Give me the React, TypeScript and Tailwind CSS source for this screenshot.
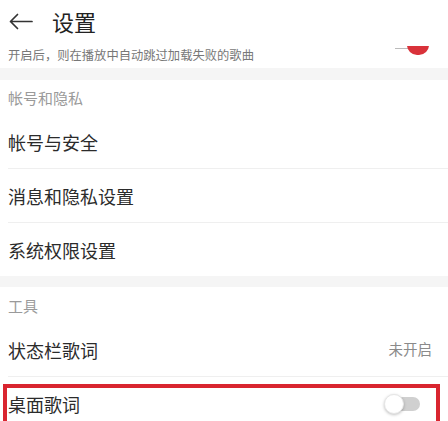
import React from 'react';

const font = { fontFamily: '"Noto Sans CJK SC", "Noto Sans", sans-serif' };

function Divider() {
  return <div className="ml-[8px] h-px bg-[#efefef]" />;
}

function Row({ label, right }: { label: string; right?: React.ReactNode }) {
  return (
    <div className="flex h-[53px] items-center justify-between pl-[8px] pr-[16px]">
      <span className="text-[18px] leading-none text-[#2b2b2b]">{label}</span>
      {right}
    </div>
  );
}

function SectionTitle({ label, h }: { label: string; h: string }) {
  return (
    <div className={`flex items-center pl-[8px] ${h}`}>
      <span className="text-[15px] leading-none text-[#9a9a9a]">{label}</span>
    </div>
  );
}

export default function App() {
  return (
    <div className="relative h-[421px] w-[448px] overflow-hidden bg-white" style={font}>
      {/* 顶部栏 */}
      <div className="flex h-[42px] items-center pl-[9px]">
        <svg width="24" height="17" viewBox="0 0 24 17" fill="none" stroke="#333" strokeWidth="1.7" strokeLinecap="round" strokeLinejoin="round">
          <path d="M23 8.5H1.5M8.5 1.5L1.5 8.5L8.5 15.5" />
        </svg>
        <span className="ml-[19px] text-[22px] leading-none text-[#222]">设置</span>
      </div>

      {/* 被遮住一半的开关行 */}
      <div className="relative flex h-[26px] items-center pl-[8px]">
        <span className="text-[12.3px] leading-none text-[#777]">开启后，则在播放中自动跳过加载失败的歌曲</span>
        <div className="absolute left-[395px] top-[4px] h-[9px] w-[34px] overflow-hidden">
          <div className="absolute left-0 top-[2px] h-px w-[16px] bg-[#bbb]" />
          <div className="absolute bottom-0 left-[12px] h-[20px] w-[22px] rounded-full bg-[#d9323a]" />
        </div>
      </div>

      <div className="h-[12px] bg-[#f5f5f5]" />

      <SectionTitle label="帐号和隐私" h="h-[35px]" />
      <Row label="帐号与安全" />
      <Divider />
      <Row label="消息和隐私设置" />
      <Divider />
      <Row label="系统权限设置" />

      <div className="h-[11px] bg-[#f5f5f5]" />

      <SectionTitle label="工具" h="h-[36px]" />
      <Row
        label="状态栏歌词"
        right={<span className="text-[14.5px] leading-none text-[#8a8a8a]">未开启</span>}
      />
      <Divider />
      <Row
        label="桌面歌词"
        right={
          <div className="relative mr-[12px] h-[20px] w-[36px]">
            <div className="absolute right-0 top-[3px] h-[14px] w-[30px] rounded-full bg-[#d0d0d0]" />
            <div className="absolute left-0 top-0 h-[20px] w-[20px] rounded-full border border-[#e6e6e6] bg-white shadow-[0_1px_3px_rgba(0,0,0,0.25)]" />
          </div>
        }
      />

      {/* 红色标注框 */}
      <div className="absolute left-[3px] top-[384px] h-[60px] w-[437px] border-[4px] border-[#d9252f]" />
    </div>
  );
}
